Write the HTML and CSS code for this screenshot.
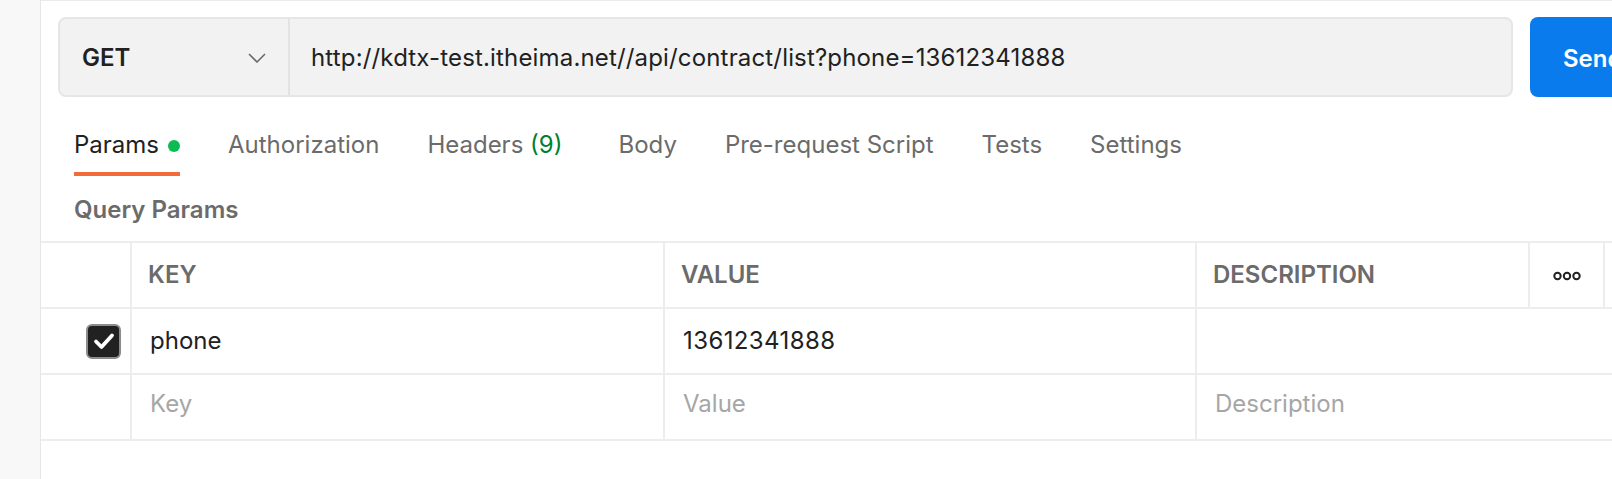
FILE: index.html
```html
<!DOCTYPE html>
<html lang="en">
<head>
<meta charset="utf-8">
<title>Request</title>
<link rel="stylesheet" href="styles.css">
</head>
<body>
<div class="app">
  <aside class="sidebar"></aside>
  <main class="main">
    <div class="request-row">
      <div class="url-bar">
        <div class="method">
          <span class="method-name">GET</span>
          <svg class="chevron" width="18" height="10" viewBox="0 0 18 10"><polyline points="1,1 9,9 17,1" fill="none" stroke="#6b6b6b" stroke-width="1.6"/></svg>
        </div>
        <div class="url">http://kdtx-test.itheima.net//api/contract/list?phone=13612341888</div>
      </div>
      <button class="send">Send</button>
    </div>

    <nav class="tabs">
      <div class="tab active">Params<span class="dot"></span></div>
      <div class="tab">Authorization</div>
      <div class="tab tab-headers">Headers <span class="count">(9)</span></div>
      <div class="tab">Body</div>
      <div class="tab">Pre-request Script</div>
      <div class="tab">Tests</div>
      <div class="tab">Settings</div>
    </nav>

    <div class="section-title">Query Params</div>

    <div class="params">
      <div class="row head">
        <div class="cell c-check"></div>
        <div class="cell c-key">KEY</div>
        <div class="cell c-value">VALUE</div>
        <div class="cell c-desc-head">DESCRIPTION</div>
        <div class="cell c-more">
          <svg width="28" height="10" viewBox="0 0 28 10"><circle cx="4.5" cy="5" r="3.2" fill="none" stroke="#212121" stroke-width="2"/><circle cx="14" cy="5" r="3.2" fill="none" stroke="#212121" stroke-width="2"/><circle cx="23.5" cy="5" r="3.2" fill="none" stroke="#212121" stroke-width="2"/></svg>
        </div>
        <div class="cell c-rest"></div>
      </div>
      <div class="row row-mid">
        <div class="cell c-check">
          <span class="checkbox">
            <svg width="22" height="18" viewBox="0 0 22 18"><polyline points="3,9.5 8.5,15 19,3.5" fill="none" stroke="#fff" stroke-width="3.8" stroke-linecap="round" stroke-linejoin="round"/></svg>
          </span>
        </div>
        <div class="cell c-key body-text">phone</div>
        <div class="cell c-value body-text digits">13612341888</div>
        <div class="cell c-desc body-text"></div>
      </div>
      <div class="row row-new">
        <div class="cell c-check"></div>
        <div class="cell c-key body-text placeholder">Key</div>
        <div class="cell c-value body-text placeholder">Value</div>
        <div class="cell c-desc body-text placeholder">Description</div>
      </div>
    </div>
  </main>
</div>
</body>
</html>
```

FILE: styles.css
```css
html, body {
  margin: 0;
  padding: 0;
  background: #ffffff;
}

body {
  width: 1612px;
  height: 479px;
  overflow: hidden;
  font-family: Inter, "Noto Sans", sans-serif;
  font-size: 24px;
  line-height: 32px;
  color: #212121;
}

.app {
  display: flex;
  height: 479px;
}

.sidebar {
  width: 40px;
  flex: 0 0 40px;
  background: #f8f8f8;
  border-right: 1px solid #e6e6e6;
}

.main {
  flex: 1;
  min-width: 0;
  border-top: 1px solid #ebebeb;
  overflow: hidden;
}

/* Request row */
.request-row {
  display: flex;
  gap: 17px;
  padding: 16px 0 0 17px;
  height: 80px;
}

.url-bar {
  width: 1455px;
  flex: 0 0 1455px;
  box-sizing: border-box;
  height: 80px;
  display: flex;
  background: #f2f2f2;
  border: 2px solid #e6e6e6;
  border-radius: 8px;
}

.method {
  width: 230px;
  box-sizing: border-box;
  display: flex;
  align-items: center;
  justify-content: space-between;
  padding: 2px 22px 0 22px;
  border-right: 2px solid #e2e2e2;
}

.method-name {
  font-weight: 600;
  color: #212121;
}

.chevron {
  display: block;
  margin-top: 0;
}

.url {
  display: flex;
  align-items: center;
  padding: 2px 0 0 21px;
  color: #212121;
  white-space: nowrap;
  letter-spacing: 0.16px;
}

.send {
  flex: 0 0 200px;
  height: 80px;
  border: 0;
  border-radius: 8px;
  background: #097bed;
  color: #ffffff;
  font-family: Inter, "Noto Sans", sans-serif;
  font-size: 24px;
  font-weight: 600;
  text-align: left;
  padding: 2px 0 0 33px;
}

/* Tabs */
.tabs {
  display: flex;
  gap: 48px;
  padding: 32px 0 0 33px;
}

.tab {
  display: flex;
  align-items: center;
  color: #6b6b6b;
  padding-bottom: 11px;
  border-bottom: 4px solid transparent;
  white-space: pre;
}

.tab.active {
  color: #212121;
  border-bottom-color: #f26b3a;
}

.dot {
  width: 12px;
  height: 12px;
  border-radius: 50%;
  background: #0cbb52;
  margin-left: 9px;
  margin-top: 2px;
}

.count {
  color: #007f31;
}

.tab-headers {
  margin-right: 8px;
}

.section-title {
  padding: 18px 0 0 33px;
  font-weight: 600;
  color: #6b6b6b;
  height: 32px;
}

/* Params table */
.params {
  margin-top: 15px;
  border-top: 2px solid #ededed;
}

.row {
  display: flex;
  height: 66px;
  box-sizing: border-box;
  border-bottom: 2px solid #ededed;
}

.cell {
  box-sizing: border-box;
  display: flex;
  align-items: center;
  border-right: 2px solid #ededed;
  white-space: nowrap;
}

.c-check {
  width: 91px;
  flex: 0 0 91px;
  justify-content: flex-end;
  padding-right: 9px;
}

.c-key {
  width: 533px;
  flex: 0 0 533px;
}

.c-value {
  width: 532px;
  flex: 0 0 532px;
}

.c-desc-head {
  width: 333px;
  flex: 0 0 333px;
}

.c-desc {
  flex: 1;
  border-right: 0;
}

.c-more {
  width: 75px;
  flex: 0 0 75px;
  justify-content: center;
}

.c-rest {
  flex: 1;
  border-right: 0;
}

.head .cell {
  padding-left: 16px;
  font-weight: 600;
  color: #6b6b6b;
}

.head .c-check {
  padding-left: 0;
}

.head .c-more {
  padding-left: 0;
  padding-top: 1px;
}

.body-text {
  padding-left: 18px;
  color: #212121;
}

.digits {
  letter-spacing: 0.4px;
}

.row-new .cell {
  padding-bottom: 6px;
}

.placeholder {
  color: #a6a6a6;
}

.checkbox {
  width: 35px;
  height: 35px;
  box-sizing: border-box;
  border: 2px solid #8c8c8c;
  border-radius: 6px;
  background: #212121;
  display: flex;
  align-items: center;
  justify-content: center;
}

.checkbox svg {
  display: block;
}
```
